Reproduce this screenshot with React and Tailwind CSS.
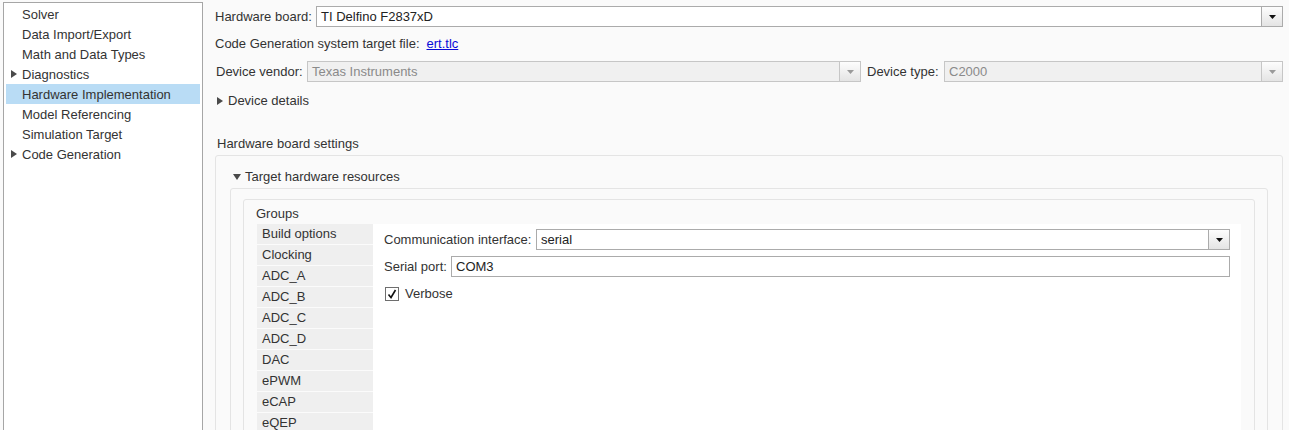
import React from "react";

const font = { fontFamily: '"Liberation Sans", Arial, sans-serif' };

function TriRight({ className = "" }) {
  return (
    <svg width="6" height="8" viewBox="0 0 6 8" className={className}>
      <path d="M0 0 L6 4 L0 8 Z" fill="#4a4a4a" />
    </svg>
  );
}
function TriDown({ className = "" }) {
  return (
    <svg width="8" height="6" viewBox="0 0 8 6" className={className}>
      <path d="M0 0 L8 0 L4 6 Z" fill="#4a4a4a" />
    </svg>
  );
}

function Combo({ value, disabled, className = "" }) {
  return (
    <div
      className={
        "flex h-[21px] border " +
        (disabled ? "border-[#c6c6c6] bg-[#f0f0f0]" : "border-[#ababab] bg-white") +
        " " +
        className
      }
    >
      <div
        className={
          "flex-1 flex items-center pl-[4px] text-[13px] leading-none " +
          (disabled ? "text-[#8a8a8a]" : "text-[#222]")
        }
      >
        {value}
      </div>
      <div
        className={
          "w-[21px] flex items-center justify-center border-l bg-gradient-to-b from-[#fdfdfd] to-[#e4e4e4] " +
          (disabled ? "border-[#c6c6c6]" : "border-[#ababab]")
        }
      >
        <svg width="7" height="4" viewBox="0 0 7 4">
          <path d="M0 0 L7 0 L3.5 4 Z" fill={disabled ? "#9a9a9a" : "#111"} />
        </svg>
      </div>
    </div>
  );
}

const treeItems = [
  { label: "Solver" },
  { label: "Data Import/Export" },
  { label: "Math and Data Types" },
  { label: "Diagnostics", arrow: true },
  { label: "Hardware Implementation", selected: true },
  { label: "Model Referencing" },
  { label: "Simulation Target" },
  { label: "Code Generation", arrow: true },
];

const groups = [
  "Build options",
  "Clocking",
  "ADC_A",
  "ADC_B",
  "ADC_C",
  "ADC_D",
  "DAC",
  "ePWM",
  "eCAP",
  "eQEP",
];

export default function App() {
  return (
    <div
      className="w-[1289px] h-[430px] overflow-hidden flex bg-[#fafafa] text-[13px] text-[#333]"
      style={font}
    >
      {/* Left tree */}
      <div className="pl-[3px] pt-[2px] bg-[#fafafa]">
        <div className="w-[200px] h-[440px] border border-[#a6a6a6] bg-white pt-[1px] px-[2px]">
          {treeItems.map((it) => (
            <div
              key={it.label}
              className={
                "h-[20px] flex items-center " + (it.selected ? "bg-[#b9dcf5]" : "")
              }
            >
              <div className="w-[16px] flex justify-end pr-[5px]">
                {it.arrow && <TriRight />}
              </div>
              <span className="leading-none">{it.label}</span>
            </div>
          ))}
        </div>
      </div>

      {/* Right pane */}
      <div className="flex-1 pl-[12px] pr-[6px] pt-[6px]">
        <div className="flex items-center h-[21px]">
          <span className="w-[101px] shrink-0">Hardware board:</span>
          <Combo value="TI Delfino F2837xD" className="flex-1" />
        </div>
        <div className="flex items-center h-[20px] mt-[7px]">
          <span>Code Generation system target file:</span>
          <a className="ml-[7px] text-[#0a0ad8] underline">ert.tlc</a>
        </div>
        <div className="flex items-center h-[21px] mt-[7px] ml-[1px]">
          <span className="w-[91px] shrink-0">Device vendor:</span>
          <Combo value="Texas Instruments" disabled className="w-[554px]" />
          <span className="ml-[6px] w-[77px] shrink-0">Device type:</span>
          <Combo value="C2000" disabled className="flex-1" />
        </div>
        <div className="flex items-center h-[20px] mt-[9px] ml-[2px]">
          <TriRight />
          <span className="ml-[5px]">Device details</span>
        </div>

        <div className="mt-[23px] ml-[2px] h-[20px] flex items-center">
          Hardware board settings
        </div>

        {/* Outer panel */}
        <div className="mt-[1px] border border-[#e4e4e4] rounded-[3px] px-[14px] pt-[11px] h-[300px]">
          <div className="flex items-center h-[20px] ml-[3px]">
            <TriDown />
            <span className="ml-[4px]">Target hardware resources</span>
          </div>
          <div className="mt-[1px] border border-[#e4e4e4] rounded-[3px] px-[12px] pt-[10px] h-[260px]">
            <div className="border border-[#e4e4e4] rounded-[3px] px-[13px] pt-[5px] h-[250px]">
              <div className="h-[18px] flex items-center -ml-[1px]">Groups</div>
              <div className="flex mt-[1px]">
                <div className="w-[116px] shrink-0 flex flex-col gap-[1px] bg-[#fbfbfb]">
                  {groups.map((g) => (
                    <div
                      key={g}
                      className="h-[20px] flex items-center pl-[5px] bg-[#efefef]"
                    >
                      {g}
                    </div>
                  ))}
                </div>
                <div className="flex-1 bg-white pl-[11px] pr-[11px] pt-[5px] h-[220px]">
                  <div className="flex items-center h-[21px]">
                    <span className="w-[152px] shrink-0">Communication interface:</span>
                    <Combo value="serial" className="flex-1" />
                  </div>
                  <div className="flex items-center h-[21px] mt-[6px]">
                    <span className="w-[67px] shrink-0">Serial port:</span>
                    <div className="flex-1 h-[21px] border border-[#ababab] bg-white flex items-center pl-[4px] text-[#222]">
                      COM3
                    </div>
                  </div>
                  <div className="flex items-center h-[16px] mt-[9px] ml-[1px]">
                    <div className="w-[14px] h-[14px] border border-[#6e6e6e] bg-white flex items-center justify-center">
                      <svg width="10" height="10" viewBox="0 0 10 10">
                        <path
                          d="M1.5 5.5 L4 8.5 L8.5 1"
                          stroke="#111"
                          strokeWidth="1.6"
                          fill="none"
                        />
                      </svg>
                    </div>
                    <span className="ml-[6px]">Verbose</span>
                  </div>
                </div>
              </div>
            </div>
          </div>
        </div>
      </div>
    </div>
  );
}
